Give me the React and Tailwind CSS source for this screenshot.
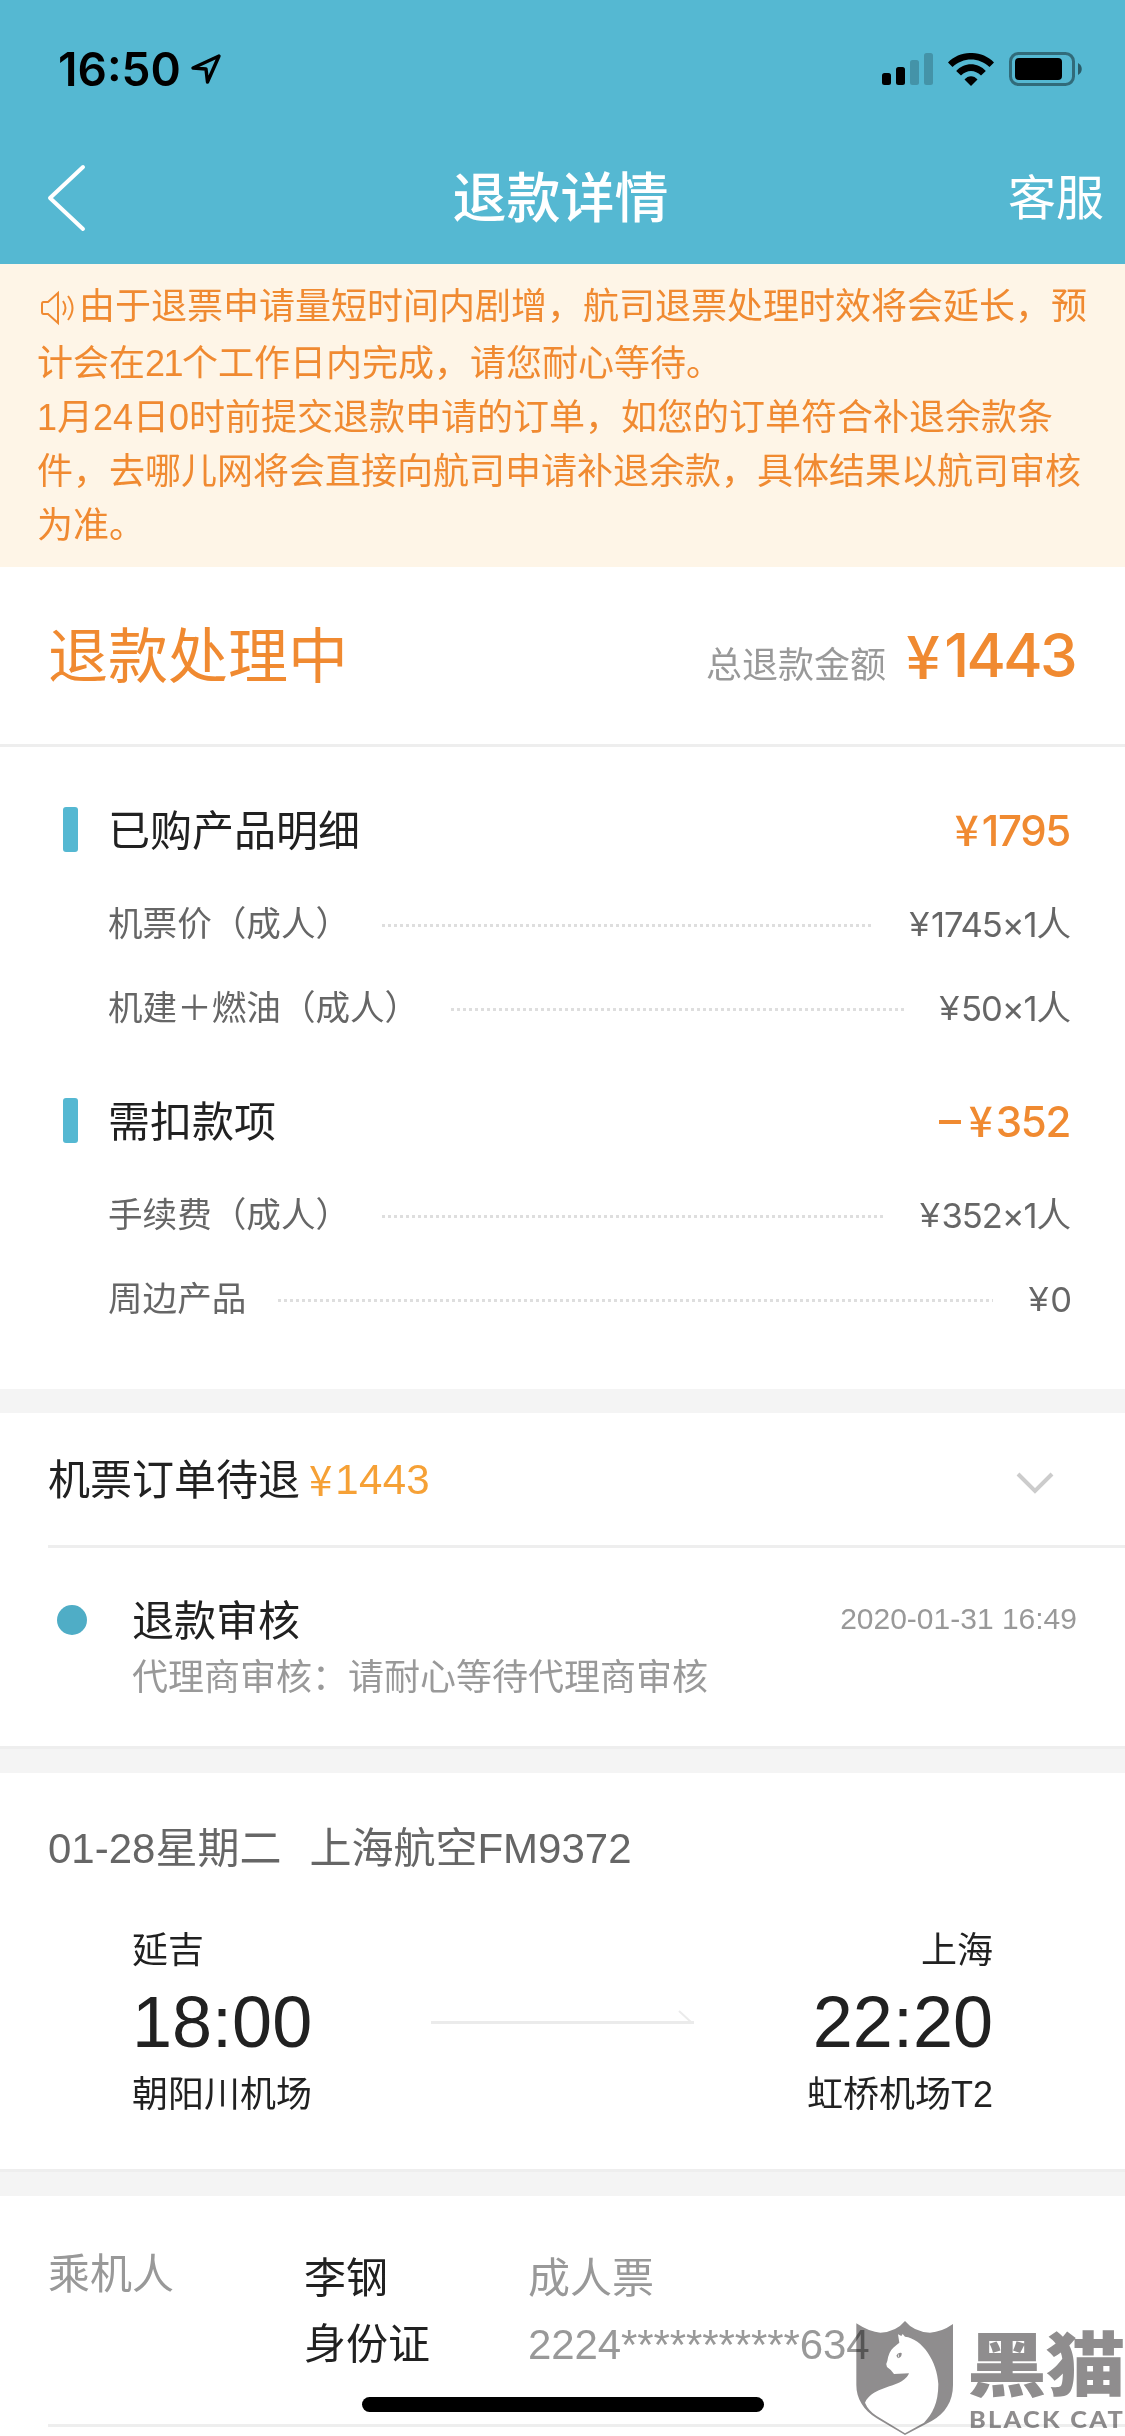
const purchased = [
  { label: "机票价（成人）", amount: "1745×1", unit: "人" },
  { label: "机建＋燃油（成人）", amount: "50×1", unit: "人" },
]

const deducted = [
  { label: "手续费（成人）", amount: "352×1", unit: "人" },
  { label: "周边产品", amount: "0", unit: "" },
]

function StatusBar() {
  return (
    <div className="flex h-[138px] items-center justify-between pl-[58px] pr-[43px]">
      <div className="flex items-center">
        <span className="font-['Inter'] text-[46px] font-semibold leading-none text-black">16:50</span>
        <svg className="ml-[9px] h-8 w-8" viewBox="0 0 32 32" fill="none" stroke="black" strokeWidth="3.4" strokeLinejoin="round">
          <path d="M29 3 L3 15 L16 16 L17.5 29 Z" />
        </svg>
      </div>
      <div className="flex items-center">
        <svg className="h-8 w-[51px]" viewBox="0 0 51 32">
          <rect x="0" y="20" width="9" height="12" rx="2.5" />
          <rect x="14" y="14" width="9" height="18" rx="2.5" />
          <rect x="28" y="7" width="9" height="25" rx="2.5" opacity="0.2" />
          <rect x="42" y="0" width="9" height="32" rx="2.5" opacity="0.2" />
        </svg>
        <svg className="ml-[15px] h-[33px] w-[46px]" viewBox="0 0 46 33">
          <path d="M0 9.5 C12 -3.2 34 -3.2 46 9.5 L41.5 14 C31 4 15 4 4.500 14 Z" />
          <path d="M8.200 18 C16 9 30 9 37.800 18 L33 22.500 C27 16.500 19 16.500 13 22.500 Z" />
          <path d="M16.500 26.500 C20 22 26 22 29.500 26.500 L23 33 Z" />
        </svg>
        <svg className="ml-[15px] h-[34px] w-[73px]" viewBox="0 0 73 34">
          <rect x="1.500" y="1.500" width="63" height="31" rx="8" fill="none" stroke="black" strokeWidth="3" opacity="0.42" />
          <rect x="6" y="6" width="47" height="22" rx="4" />
          <path d="M69 11 C74 13.500 74 20.500 69 23 Z" opacity="0.5" />
        </svg>
      </div>
    </div>
  )
}

function NavBar() {
  return (
    <div className="flex h-[126px] items-center justify-between pl-[19px] pr-[21px] text-white">
      <div className="flex w-[96px]">
        <svg className="ml-[26px] mt-[-6px] h-[68px] w-[42px]" viewBox="0 0 42 68" fill="none" stroke="currentColor" strokeWidth="4" strokeLinecap="round" strokeLinejoin="round">
          <path d="M38 3 L5 34 L38 65" />
        </svg>
      </div>
      <h1 className="mr-[2px] mt-[-4px] text-[54px] font-medium leading-none">退款详情</h1>
      <span className="mt-[-4px] text-5xl leading-none">客服</span>
    </div>
  )
}

function Notice() {
  return (
    <div className="h-[303px] bg-[#fef5e7] px-[37px] pt-[16px] text-[36px] leading-[54px] text-[#f08a31]">
      <p className="h-[57px] whitespace-nowrap">
        <svg className="ml-[3px] mr-[3px] mt-[10px] inline-block h-[36px] w-[36px] align-top" viewBox="0 0 36 36" fill="none" stroke="currentColor" strokeWidth="2">
          <path d="M18 3 L8 12 H3.500 Q2 12 2 14 V22 Q2 24 3.500 24 H8 L18 33 Z" />
          <path d="M23 11 Q28 18 23 25" />
          <path d="M28 6 Q37 18 28 30" />
        </svg>
        由于退票申请量短时间内剧增，航司退票处理时效将会延长，预
      </p>
      <p>计会在<span className="tracking-[-1.5px]">21</span>个工作日内完成，请您耐心等待。</p>
      <p className="whitespace-nowrap">1月24日0时前提交退款申请的订单，如您的订单符合补退余款条</p>
      <p className="whitespace-nowrap">件，去哪儿网将会直接向航司申请补退余款，具体结果以航司审核</p>
      <p>为准。</p>
    </div>
  )
}

function FeeGroup({ title, sign, total, items }) {
  return (
    <div>
      <div className="flex h-[45px] items-center pl-[63px] pr-[55px]">
        <span className="h-[45px] w-[15px] rounded-[3px] bg-[#55b8d2]" />
        <h3 className="ml-[30px] mt-[5px] flex-1 text-[42px] leading-none text-[#212121]">{title}</h3>
        <span className="flex items-center text-[42px] font-medium leading-none text-[#f08a31]">
          {sign && <span className="mr-[8px] mt-[3px] h-1 w-[22px] bg-[#f08a31]" />}
          <span className="mr-[3px] mt-[-3px] font-['Noto_Sans_CJK_SC']">¥</span>
          <span className="mt-[3px] font-['Inter'] tracking-[-1.3px]">{total}</span>
        </span>
      </div>
      <div className="pt-[29px]">
        {items.map((item) => (
          <div key={item.label} className="flex h-[84px] items-center pl-[108px] pr-[54px] text-[34.6px] leading-none text-[#666]">
            <span className="mt-[2px]">{item.label}</span>
            <span className="ml-8 mr-[36px] mt-[5px] h-[3px] flex-1 bg-[repeating-linear-gradient(90deg,#dedede_0_3px,transparent_3px_6px)]" />
            <span className="mt-[2px] flex items-center">
              <span className="mr-[2px]">¥</span>
              <span className="font-['Inter'] tracking-[-1.1px]">{item.amount}</span>
              <span>{item.unit}</span>
            </span>
          </div>
        ))}
      </div>
    </div>
  )
}

function Progress() {
  return (
    <section>
      <div className="ml-12 flex h-[135px] items-center border-b-3 border-[#eee] pr-[70px] pt-[3px]">
        <span className="text-[42px] leading-none text-[#212121]">机票订单待退</span>
        <span className="ml-[9px] mt-[-6px] font-['Noto_Sans_CJK_SC'] text-[42px] leading-none text-[#f6a136]">¥</span>
        <span className="ml-[3px] mt-[-1px] flex-1 text-[42px] leading-none tracking-[0.3px] text-[#f6a136]">1443</span>
        <svg className="mt-[4px] h-6 w-[40px]" viewBox="0 0 40 24" fill="none" stroke="#ccc" strokeWidth="4">
          <path d="M3 3 L20 20 L37 3" />
        </svg>
      </div>
      <div className="flex h-[198px] pl-[57px] pr-[48px] pt-[50px]">
        <span className="mt-[7px] h-[30px] w-[30px] rounded-full bg-[#4fadc6]" />
        <div className="ml-[45px] flex-1 pt-[2px]">
          <div className="flex h-11 items-center justify-between">
            <h3 className="text-[42px] leading-none text-[#212121]">退款审核</h3>
            <span className="mt-[-6px] text-[30px] leading-none text-[#999]">2020-01-31 16:49</span>
          </div>
          <p className="mt-4 text-[36px] leading-none text-[#999]">代理商审核：请耐心等待代理商审核</p>
        </div>
      </div>
    </section>
  )
}

function Flight() {
  return (
    <section className="h-[396px] pt-[55px]">
      <div className="flex gap-[28px] pl-12 text-[42px] leading-none text-[#666]">
        <span>01-28星期二</span>
        <span>上海航空FM9372</span>
      </div>
      <div className="mt-[63px] flex justify-between pl-[132px] pr-[132px] text-[36px] leading-none text-[#212121]">
        <div>
          <p>延吉</p>
          <p className="mt-[17px] text-7xl leading-none">18:00</p>
          <p className="mt-[19px]">朝阳川机场</p>
        </div>
        <svg className="ml-[8px] mt-[76px] h-4 w-[266px]" viewBox="0 0 266 16" fill="none" stroke="#ebebeb" strokeWidth="3">
          <path d="M0 13.500 H263" />
          <path d="M248 2 L260 13" strokeWidth="2" />
        </svg>
        <div className="text-right">
          <p>上海</p>
          <p className="mt-[17px] text-7xl leading-none">22:20</p>
          <p className="mt-[19px]">虹桥机场T2</p>
        </div>
      </div>
    </section>
  )
}

function Passenger() {
  return (
    <section className="ml-12 flex h-[231px] border-b-3 border-[#eee] pt-[58px] text-[42px] leading-none text-[#999]">
      <span className="w-[256px]">乘机人</span>
      <div className="w-[224px] pt-[4px] text-[#212121]">
        <p>李钢</p>
        <p className="mt-6">身份证</p>
      </div>
      <div className="pt-[4px]">
        <p>成人票</p>
        <p className="mt-6 tracking-[-0.1px]">2224***********634</p>
      </div>
    </section>
  )
}

function Watermark() {
  return (
    <div className="absolute left-[855px] top-[2320px] flex text-[#8f8d8e] mix-blend-multiply">
      <svg className="h-[116px] w-[100px]" viewBox="90 90 300 348" fill="currentColor">
        <path
          fillRule="evenodd"
          d="M94 100 Q135 127 166 128 Q213 126 240 93 Q267 126 315 128 Q350 126 384 102 V285 C384 335 360 370 320 393 L240 435 L155 385 C115 360 94 325 94 285 Z M120 338 C140 296 195 294 230 274 Q248 263 252 250 L207 252 Q200 240 186 231 Q181 222 187 213 Q191 185 205 173 Q214 165 223 158 L219 133 L229 138 L233 132 L240 140 C292 146 337 215 340 282 C340 340 322 372 297 398 L240 430 L155 378 Q130 362 120 338 Z"
        />
        <path d="M214 197 Q219 186 230 189 Q231 202 219 205 Z M221 190 Q217 197 222 204" />
      </svg>
      <div className="ml-[12px] w-[158px] whitespace-nowrap">
        <p className="mt-[12px] origin-left scale-x-[1.14] text-[70px] font-black leading-[70px] tracking-[-1px]">黑猫</p>
        <p className="ml-[2px] mt-[5px] origin-left scale-x-[1.1] font-['Lato'] text-[23px] font-black leading-[24px] tracking-[2.1px]">BLACK CAT</p>
      </div>
    </div>
  )
}

export default function App() {
  return (
    <div className="relative h-[2436px] w-[1125px] overflow-hidden bg-white font-['Liberation_Sans','Noto_Sans_CJK_SC',sans-serif]">
      <header className="h-[264px] bg-[#55b8d2]">
        <StatusBar />
        <NavBar />
      </header>
      <Notice />
      <section className="flex h-[180px] items-center border-b-3 border-[#eee] pl-12 pr-[50px] text-[#f08a31]">
        <h2 className="mt-[4px] flex-1 text-6xl leading-none">退款处理中</h2>
        <span className="mt-[20px] text-[36px] leading-none text-[#999]">总退款金额</span>
        <span className="ml-5 mt-[-6px] font-['Noto_Sans_CJK_SC'] text-6xl font-medium leading-none">¥</span>
        <span className="ml-[4px] mt-[-2px] font-['Inter'] text-6xl font-medium leading-none tracking-[-2.6px]">1443</span>
      </section>
      <section className="flex h-[642px] flex-col gap-[49px] pt-[60px]">
        <FeeGroup title="已购产品明细" total="1795" items={purchased} />
        <FeeGroup title="需扣款项" sign total="352" items={deducted} />
      </section>
      <div className="h-6 bg-[#f4f4f4]" />
      <Progress />
      <div className="h-[27px] border-t-3 border-[#eee] bg-[#f4f4f4]" />
      <Flight />
      <div className="h-[27px] border-t-3 border-[#eee] bg-[#f4f4f4]" />
      <Passenger />
      <div className="absolute left-[362px] top-[2397px] h-[15px] w-[402px] rounded-full bg-black" />
      <Watermark />
    </div>
  )
}
